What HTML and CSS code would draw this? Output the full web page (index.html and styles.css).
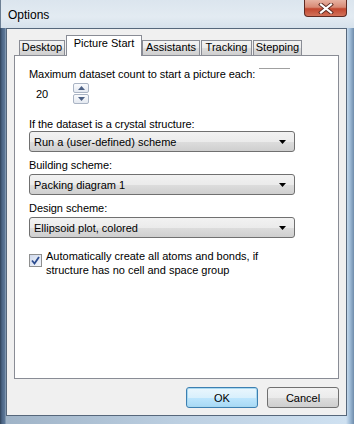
FILE: index.html
```html
<!DOCTYPE html>
<html>
  <head>
    <title>Options</title>
    <link rel="stylesheet" href="styles.css">
  </head>
  <body>
    <div class="window">
      <div class="titlebar">
        <span class="title">Options</span>
        <button class="close">
          <svg width="16" height="11" viewBox="0 0 16 11">
            <path d="M3 1.5 L13 9.5 M13 1.5 L3 9.5" stroke="#5a2a22" stroke-width="4" stroke-linecap="square"/>
            <path d="M3 1.5 L13 9.5 M13 1.5 L3 9.5" stroke="#fff" stroke-width="2.2" stroke-linecap="square"/>
          </svg>
        </button>
      </div>
      <div class="client">
        <div class="tabs">
          <div class="tab tab-desktop">Desktop</div>
          <div class="tab tab-picture active">Picture Start</div>
          <div class="tab tab-assist">Assistants</div>
          <div class="tab tab-track">Tracking</div>
          <div class="tab tab-step">Stepping</div>
        </div>
        <div class="panel">
          <div class="label first">Maximum dataset count to start a picture each:<span class="rule"></span></div>
          <div class="spin">
            <span class="spin-value">20</span>
            <div class="spin-btns">
              <span class="spin-btn">
                <svg width="7" height="4" viewBox="0 0 7 4"><path d="M0 4 L3.5 0 L7 4 Z" fill="#4d6185"/></svg>
              </span>
              <span class="spin-btn">
                <svg width="7" height="4" viewBox="0 0 7 4"><path d="M0 0 L3.5 4 L7 0 Z" fill="#4d6185"/></svg>
              </span>
            </div>
          </div>

          <div class="label gap-big">If the dataset is a crystal structure:</div>
          <div class="combo first-combo">
            <span>Run a (user-defined) scheme</span>
            <svg width="7" height="4" viewBox="0 0 7 4"><path d="M0 0 L7 0 L3.5 4 Z" fill="#000"/></svg>
          </div>

          <div class="label">Building scheme:</div>
          <div class="combo">
            <span>Packing diagram 1</span>
            <svg width="7" height="4" viewBox="0 0 7 4"><path d="M0 0 L7 0 L3.5 4 Z" fill="#000"/></svg>
          </div>

          <div class="label">Design scheme:</div>
          <div class="combo">
            <span>Ellipsoid plot, colored</span>
            <svg width="7" height="4" viewBox="0 0 7 4"><path d="M0 0 L7 0 L3.5 4 Z" fill="#000"/></svg>
          </div>

          <div class="check">
            <span class="box">
              <svg width="9" height="9" viewBox="0 0 9 9"><path d="M1 4.5 L3.5 7.5 L8 1" fill="none" stroke="#2b4b8f" stroke-width="1.8"/></svg>
            </span>
            <span class="check-text">Automatically create all atoms and bonds, if structure has no cell and space group</span>
          </div>
        </div>
        <div class="actions">
          <button class="btn default">OK</button>
          <button class="btn">Cancel</button>
        </div>
      </div>
    </div>
  </body>
</html>
```

FILE: styles.css
```css
body {
  margin: 0;
  font-family: "Liberation Sans", Arial, sans-serif;
  font-size: 11px;
  color: #000;
}
.window {
  position: relative;
  width: 354px;
  height: 424px;
  box-sizing: border-box;
  padding: 0 7px 8px 6px;
  /* glass frame */
  background: linear-gradient(to right, #2e4158 0, #4b6585 2px, #5e7999 5px, #9fb3c7 6px, #bccfe1 50%, #cfe1f1 346px, #9fbcd8 350px, #6f8cab 354px);
}
.titlebar {
  height: 28px;
  margin: 0 -7px 0 -6px;
  padding-left: 8px;
  display: flex;
  align-items: center;
  background: linear-gradient(to bottom, #dbe5ee 0, #e3ebf2 60%, #d6e1eb 100%);
  box-shadow: inset 1px 0 0 #6c7f94;
}
.title {
  font-size: 12px;
  padding-top: 2px;
}
.close {
  position: absolute;
  top: 0;
  right: 7px;
  width: 43px;
  height: 17px;
  padding: 0;
  border: 1px solid #5e2a22;
  border-top: none;
  border-radius: 0 0 4px 4px;
  background: linear-gradient(to bottom, #e7b2a2 0, #d88a75 45%, #c2472f 55%, #d2725a 100%);
  display: flex;
  align-items: center;
  justify-content: center;
}
.client {
  height: 388px;
  box-sizing: border-box;
  border: 1px solid #56677b;
  background-color: #f0f0f0;
  padding: 6px 7px 0 7px;
}
.tabs {
  display: flex;
  align-items: flex-end;
  padding-left: 5px;
  height: 20px;
  position: relative;
  z-index: 1;
}
.tab {
  box-sizing: border-box;
  height: 15px;
  line-height: 13px;
  text-align: center;
  margin-right: 1px;
  border: 1px solid #898c95;
  border-bottom: none;
  background: linear-gradient(to bottom, #f3f3f3 0, #ebebeb 50%, #dddddd 51%, #cfcfcf 100%);
}
.tab-desktop { width: 46px; }
.tab-picture { width: 76px; }
.tab-assist { width: 58px; }
.tab-track { width: 51px; }
.tab-step { width: 49px; }
.tab.active {
  height: 21px;
  line-height: 15px;
  margin-right: 0;
  margin-bottom: -1px;
  background: #fff;
}
.panel {
  height: 324px;
  box-sizing: border-box;
  border: 1px solid #898c95;
  background-color: #fff;
  padding: 12px 14px 0 14px;
}
.label {
  line-height: 13px;
  margin-top: 7px;
  position: relative;
  letter-spacing: -0.05px;
}
.label.first {
  margin-top: 0;
}
.label.gap-big {
  margin-top: 14px;
}
.rule {
  position: absolute;
  left: 230px;
  top: 0;
  width: 31px;
  border-top: 1px solid #a0a0a0;
}
.spin {
  display: flex;
  width: 60px;
  height: 21px;
  margin-top: 2px;
}
.spin-value {
  flex: 1;
  padding: 5px 0 0 7px;
}
.spin-btns {
  width: 16px;
  display: flex;
  flex-direction: column;
  gap: 1px;
}
.spin-btn {
  flex: 1;
  border: 1px solid #aab4c4;
  border-radius: 2px;
  background: linear-gradient(to bottom, #fafbfd, #e4e9f1);
  display: flex;
  align-items: center;
  justify-content: center;
}
.combo {
  width: 266px;
  height: 21px;
  box-sizing: border-box;
  margin-top: 2px;
  padding: 0 8px 0 4px;
  border: 1px solid #707070;
  border-radius: 3px;
  background: linear-gradient(to bottom, #f2f2f2 0, #ebebeb 50%, #dddddd 51%, #cfcfcf 100%);
  display: flex;
  align-items: center;
  justify-content: space-between;
}
.combo.first-combo {
  margin-top: 0;
}
.check {
  display: flex;
  gap: 4px;
  margin-top: 11px;
}
.box {
  width: 11px;
  height: 11px;
  margin-top: 5px;
  border: 1px solid #8e8f8f;
  background: linear-gradient(to bottom right, #cfd9ec, #f4f6fb);
  display: flex;
  align-items: center;
  justify-content: center;
}
.check-text {
  width: 230px;
  line-height: 14px;
}
.actions {
  display: flex;
  justify-content: flex-end;
  gap: 9px;
  padding-top: 8px;
}
.btn {
  width: 72px;
  height: 21px;
  padding: 0;
  font-family: "Liberation Sans", Arial, sans-serif;
  font-size: 11px;
  color: #000;
  border: 1px solid #707070;
  border-radius: 3px;
  background: linear-gradient(to bottom, #f2f2f2 0, #ebebeb 50%, #dddddd 51%, #cfcfcf 100%);
}
.btn.default {
  border-color: #3c7fb1;
  background: linear-gradient(to bottom, #eaf6fd 0, #d9f0fc 50%, #bee6fd 51%, #a7d9f5 100%);
  box-shadow: inset 0 0 0 1px #a8d8f0;
}
```
